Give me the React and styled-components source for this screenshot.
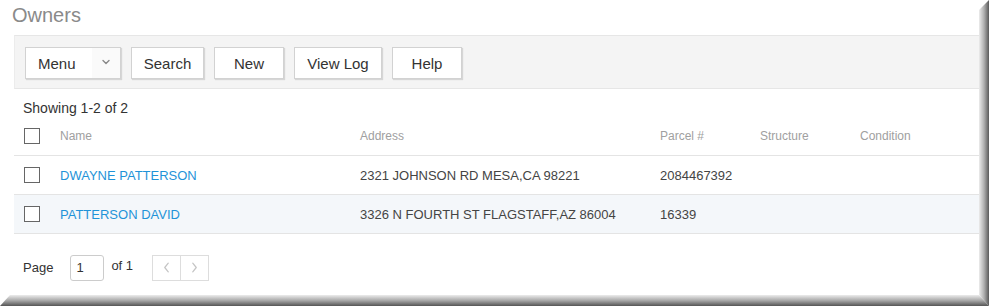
import React from "react";
import styled, { createGlobalStyle } from "styled-components";

const GlobalStyle = createGlobalStyle`
  html, body {
    margin: 0;
    padding: 0;
    background: #fff;
    font-family: "Liberation Sans", Arial, sans-serif;
  }
`;

const owners = [
  { id: 1, name: "DWAYNE PATTERSON", address: "2321 JOHNSON RD MESA,CA 98221", parcel: "2084467392" },
  { id: 2, name: "PATTERSON DAVID", address: "3326 N FOURTH ST FLAGSTAFF,AZ 86004", parcel: "16339" },
];

const Chevron = ({ dir = "down", color = "#777", w = 8, h = 9 }) => {
  const d = {
    down: "M1 1.5 L4 4.5 L7 1.5",
    left: "M6 1 L2 6 L6 11",
    right: "M2 1 L6 6 L2 11",
  }[dir];
  const vb = dir === "down" ? "0 0 8 9" : "0 0 8 12";
  return (
    <svg width={w} height={h} viewBox={vb} fill="none">
      <path d={d} stroke={color} strokeWidth="1.4" strokeLinecap="round" strokeLinejoin="round" />
    </svg>
  );
};

export default function App() {
  return (
    <>
      <GlobalStyle />
      <Frame>
        <Page>
          <Title>Owners</Title>
          <Toolbar>
            <MenuButton>
              <MenuLabel>Menu</MenuLabel>
              <MenuCaret>
                <Chevron dir="down" color="#888" />
              </MenuCaret>
            </MenuButton>
            <Button $w={73}>Search</Button>
            <Button $w={70}>New</Button>
            <Button $w={88}>View Log</Button>
            <Button $w={70}>Help</Button>
          </Toolbar>
          <Showing>Showing 1-2 of 2</Showing>
          <Grid>
            <HeadRow>
              <Cell><Check /></Cell>
              <HeadCell>Name</HeadCell>
              <HeadCell>Address</HeadCell>
              <HeadCell>Parcel #</HeadCell>
              <HeadCell>Structure</HeadCell>
              <HeadCell>Condition</HeadCell>
            </HeadRow>
            {owners.map((o, i) => (
              <Row key={o.id} $alt={i % 2 === 1}>
                <Cell><Check /></Cell>
                <NameCell>{o.name}</NameCell>
                <Cell>{o.address}</Cell>
                <Cell>{o.parcel}</Cell>
                <Cell />
                <Cell />
              </Row>
            ))}
          </Grid>
          <Pager>
            <span>Page</span>
            <PageInput defaultValue="1" />
            <OfText>of 1</OfText>
            <PagerButtons>
              <PagerButton><Chevron dir="left" color="#c4c4c4" w={7} h={11} /></PagerButton>
              <PagerButton><Chevron dir="right" color="#c4c4c4" w={7} h={11} /></PagerButton>
            </PagerButtons>
          </Pager>
        </Page>
        <RightShade />
        <BottomShade />
      </Frame>
    </>
  );
}

const Frame = styled.div`
  display: grid;
  grid-template-columns: 979px 10px;
  grid-template-rows: 295px 11px;
  width: 989px;
  height: 306px;
  overflow: hidden;
`;

const RightShade = styled.div`
  grid-column: 2;
  grid-row: 1 / span 2;
  background: linear-gradient(to right, #ececec, #b0b0b0 50%, #5a5a5a);
  clip-path: polygon(0 10px, 100% 0, 100% 100%, 0 295px);
`;

const BottomShade = styled.div`
  grid-column: 1 / span 2;
  grid-row: 2;
  background: linear-gradient(to bottom, #ececec, #a8a8a8 50%, #555);
  clip-path: polygon(0 100%, 10px 0, 979px 0, 100% 100%);
`;

const Page = styled.div`
  grid-column: 1;
  grid-row: 1;
  display: flex;
  flex-direction: column;
  padding-left: 14px;
  overflow: hidden;
  color: #333;
  & > * {
    flex-shrink: 0;
  }
`;

const Title = styled.div`
  height: 35px;
  margin-left: -2px;
  padding-top: 3px;
  box-sizing: border-box;
  font-size: 20px;
  color: #8a8a8a;
  line-height: 24px;
`;

const Toolbar = styled.div`
  display: flex;
  align-items: flex-start;
  gap: 10px;
  height: 54px;
  box-sizing: border-box;
  padding: 11px 0 0 10px;
  background: #f4f4f4;
  border-top: 1px solid #e6e6e6;
  border-bottom: 1px solid #e6e6e6;
  border-left: 1px solid #ececec;
`;

const Button = styled.button`
  width: ${(p) => p.$w}px;
  height: 32px;
  margin: 0;
  padding: 0;
  background: #fff;
  border: 1px solid #d2d2d2;
  box-shadow: 1px 1px 1px rgba(0, 0, 0, 0.12);
  font-family: inherit;
  font-size: 15px;
  color: #333;
  cursor: pointer;
`;

const MenuButton = styled(Button)`
  width: 96px;
  display: flex;
  align-items: stretch;
`;

const MenuLabel = styled.span`
  flex: 1;
  display: flex;
  align-items: center;
  padding-left: 12px;
`;

const MenuCaret = styled.span`
  width: 28px;
  display: flex;
  align-items: center;
  justify-content: center;
  background: #fafafa;
`;

const Showing = styled.div`
  height: 28px;
  padding: 11px 0 0 9px;
  box-sizing: border-box;
  font-size: 14px;
  line-height: 16px;
  color: #333;
`;

const Grid = styled.div`
  display: flex;
  flex-direction: column;
`;

const RowBase = styled.div`
  display: grid;
  grid-template-columns: 46px 300px 300px 100px 100px 1fr;
  align-items: center;
  height: 38px;
  border-bottom: 1px solid #e4e4e4;
`;

const HeadRow = styled(RowBase)``;

const Row = styled(RowBase)`
  background: ${(p) => (p.$alt ? "#f4f7fa" : "#fff")};
`;

const Cell = styled.div`
  display: flex;
  align-items: center;
  font-size: 13px;
  color: #444;
  white-space: nowrap;
  &:first-child {
    padding-left: 10px;
  }
`;

const HeadCell = styled(Cell)`
  font-size: 12px;
  color: #a0a0a0;
`;

const NameCell = styled(Cell)`
  color: #1f93d8;
`;

const Check = styled.span`
  display: inline-block;
  width: 14px;
  height: 14px;
  border: 1px solid #666;
  background: #fff;
`;

const Pager = styled.div`
  display: flex;
  align-items: center;
  height: 61px;
  padding: 6px 0 0 9px;
  box-sizing: border-box;
  font-size: 13px;
  color: #333;
`;

const PageInput = styled.input`
  width: 34px;
  height: 26px;
  box-sizing: border-box;
  margin: 0 0 0 17px;
  padding: 0 0 0 5px;
  border: 1px solid #ccc;
  border-radius: 3px;
  font-family: inherit;
  font-size: 13px;
  color: #333;
`;

const OfText = styled.span`
  margin-left: 7px;
  margin-top: -4px;
`;

const PagerButtons = styled.div`
  display: flex;
  margin-left: 19px;
`;

const PagerButton = styled.button`
  width: 29px;
  height: 26px;
  padding: 0;
  display: flex;
  align-items: center;
  justify-content: center;
  background: #fff;
  border: 1px solid #ddd;
  & + & {
    margin-left: -1px;
  }
`;
